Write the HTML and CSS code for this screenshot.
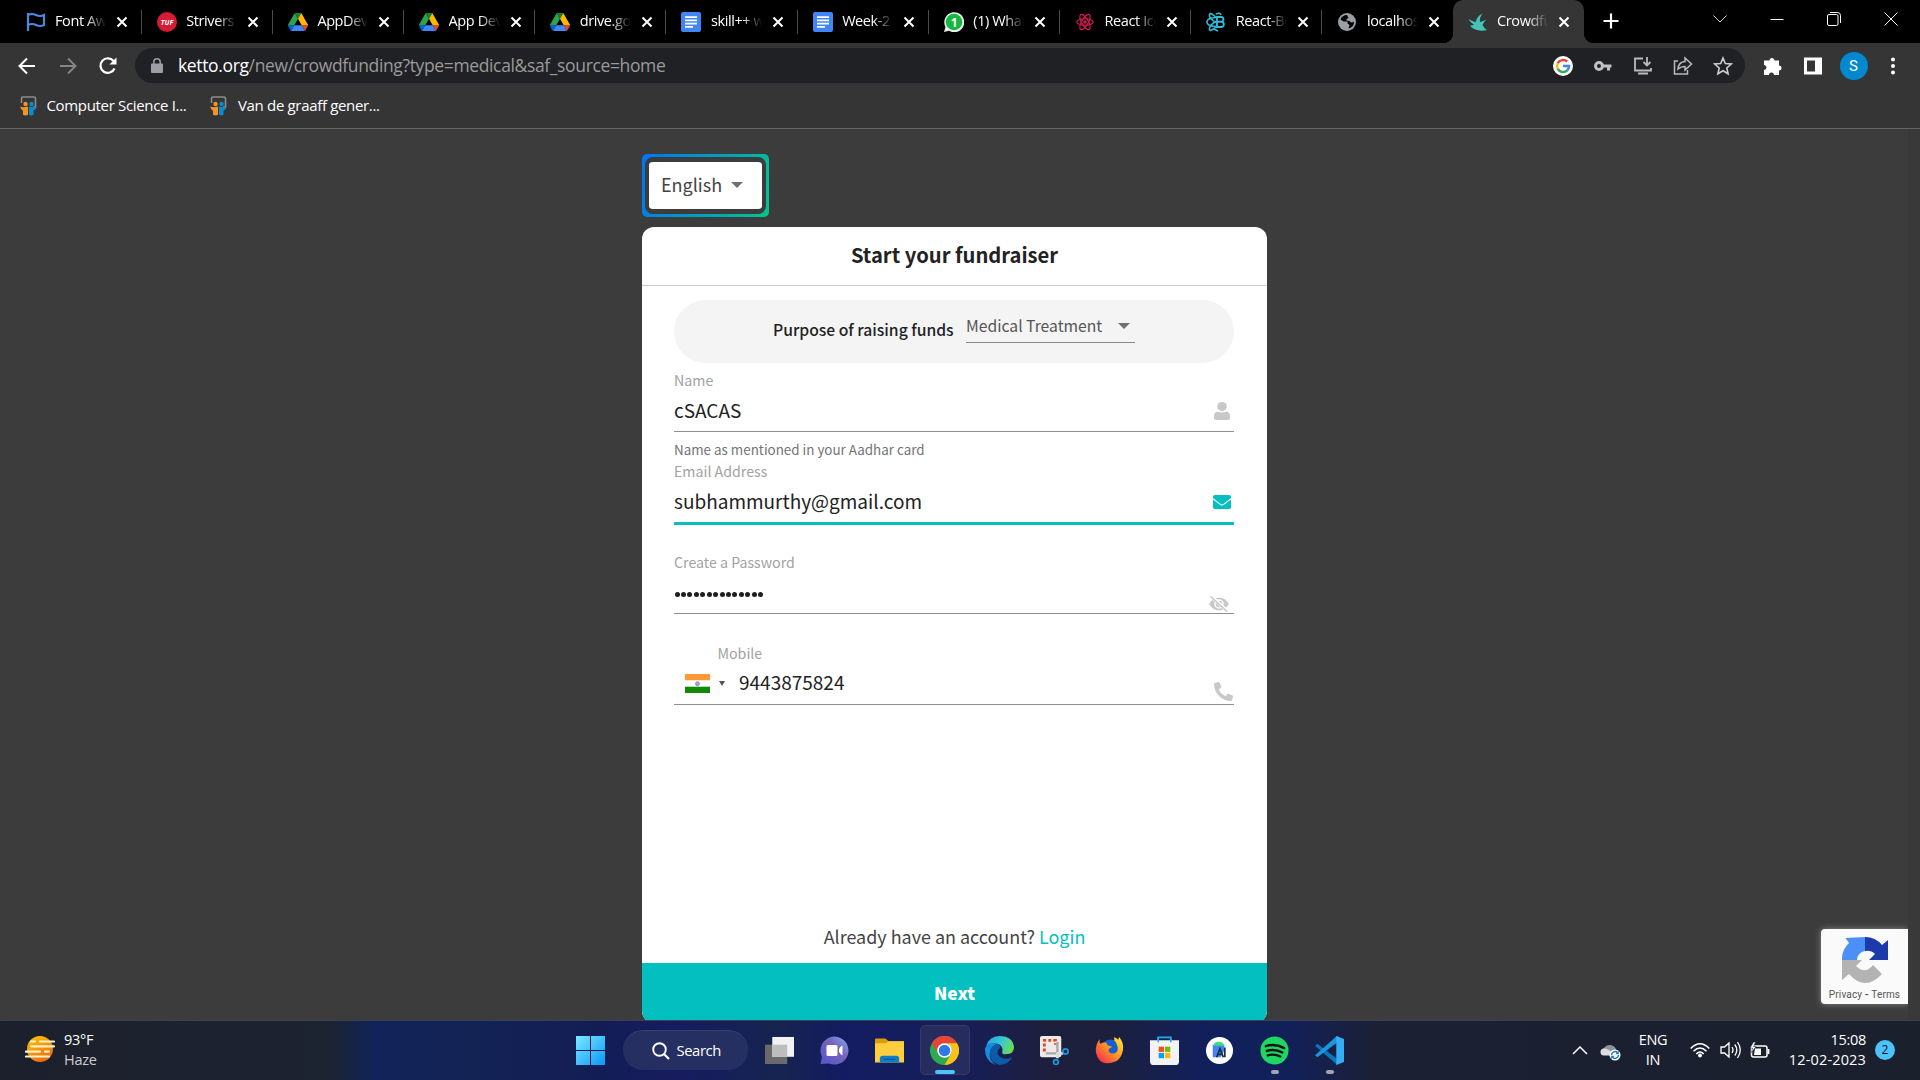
FILE: index.html
```html
<!DOCTYPE html>
<html lang="en">
<head>
<meta charset="utf-8">
<title>Crowdfunding</title>
<link rel="stylesheet" href="styles.css">
</head>
<body>
<svg class="defs" width="0" height="0">
  <defs>
    <symbol id="x" viewBox="0 0 12 12"><path d="M1.5 1.5l9 9M10.500 1.500l-9 9" stroke="#fff" stroke-width="2" fill="none"/></symbol>
    <symbol id="drive" viewBox="0 0 87.300 78"><path d="m6.600 66.850 3.850 6.650c.8 1.400 1.950 2.500 3.300 3.300l13.750-23.800h-27.500c0 1.550.4 3.100 1.200 4.500z" fill="#0066da"/><path d="m43.650 25-13.750-23.800c-1.350.8-2.500 1.900-3.300 3.300l-25.400 44a9.060 9.060 0 0 0-1.200 4.500h27.500z" fill="#2ba24c"/><path d="m73.550 76.800c1.350-.8 2.500-1.900 3.300-3.300l1.600-2.750 7.650-13.250c.8-1.400 1.200-2.950 1.200-4.500h-27.502l5.852 11.500z" fill="#ea4335"/><path d="m43.650 25 13.750-23.800c-1.350-.8-2.900-1.200-4.500-1.200h-18.500c-1.600 0-3.150.45-4.500 1.200z" fill="#188038"/><path d="m59.800 53h-32.300l-13.750 23.800c1.350.8 2.900 1.200 4.500 1.200h50.800c1.600 0 3.150-.45 4.500-1.200z" fill="#4285f4"/><path d="m73.400 26.500-12.700-22c-.8-1.400-1.950-2.500-3.300-3.300l-13.750 23.800 16.150 28h27.450c0-1.550-.4-3.100-1.200-4.500z" fill="#ffba00"/></symbol>
    <symbol id="docs" viewBox="0 0 20 20"><rect width="20" height="20" rx="2" fill="#4285f4"/><path d="M4 5.200h12M4 8.400h12M4 11.600h12M4 14.800h8" stroke="#fff" stroke-width="1.700"/></symbol>
    <symbol id="slide" viewBox="0 0 17 20"><path d="M1.500 7V2.500Q1.500 1 3 1h11q1.500 0 1.500 1.500V11H13" fill="none" stroke="#8d8d8d" stroke-width="1.600"/><circle cx="5.500" cy="8" r="2.200" fill="#f79421"/><circle cx="11.500" cy="8" r="2.200" fill="#0a8bd0"/><path d="M.3 10.500Q3 12 8 10.600v8.200q-2.500 1.600-5 0v-4Q.6 13.500.3 10.500z" fill="#f79421"/><path d="M16.700 10.500Q14 12 9 10.600v8.200q2.500 1.600 4.500 0v-4q2.900-1.300 3.200-4.300z" fill="#0a8bd0"/></symbol>
    <symbol id="atom" viewBox="0 0 20 22"><g fill="none" stroke="currentColor" stroke-width="1.300"><ellipse cx="10" cy="11" rx="9" ry="3.600"/><ellipse cx="10" cy="11" rx="9.500" ry="3.600" transform="rotate(60 10 11)"/><ellipse cx="10" cy="11" rx="9.500" ry="3.600" transform="rotate(120 10 11)"/></g><circle cx="10" cy="11" r="1.900" fill="currentColor"/></symbol>
  </defs>
</svg>

<header class="tabs">
  <div class="tab"><svg class="fav" viewBox="0 0 20 20"><path d="M2 1v18M2 3q4-2 8 0t8 0v10q-4 2-8 0t-8 0" fill="none" stroke="#4a8be0" stroke-width="2.200"/></svg><span>Font Awesome</span><svg class="close"><use href="#x"/></svg></div>
  <div class="tab"><svg class="fav" viewBox="0 0 20 20"><circle cx="10" cy="10" r="10" fill="#d81b34"/><text x="10" y="13" text-anchor="middle" class="tuf">TUF</text></svg><span>Strivers A2Z</span><svg class="close"><use href="#x"/></svg></div>
  <div class="tab"><svg class="fav"><use href="#drive"/></svg><span>AppDev Files</span><svg class="close"><use href="#x"/></svg></div>
  <div class="tab"><svg class="fav"><use href="#drive"/></svg><span>App Dev Files</span><svg class="close"><use href="#x"/></svg></div>
  <div class="tab"><svg class="fav"><use href="#drive"/></svg><span>drive.google</span><svg class="close"><use href="#x"/></svg></div>
  <div class="tab"><svg class="fav"><use href="#docs"/></svg><span>skill++ week</span><svg class="close"><use href="#x"/></svg></div>
  <div class="tab"><svg class="fav"><use href="#docs"/></svg><span>Week-2 work</span><svg class="close"><use href="#x"/></svg></div>
  <div class="tab"><svg class="fav" viewBox="0 0 20 20"><path d="M0 20l1.500-5A10 10 0 1 1 5 18.700z" fill="#eee"/><circle cx="10" cy="10" r="8.300" fill="#14b83e"/><text x="10" y="14.500" text-anchor="middle" class="wa">1</text></svg><span>(1) WhatsApp</span><svg class="close"><use href="#x"/></svg></div>
  <div class="tab"><svg class="fav pink"><use href="#atom"/></svg><span>React Icons</span><svg class="close"><use href="#x"/></svg></div>
  <div class="tab"><svg class="fav" viewBox="0 0 20 20"><g fill="none" stroke="#2fbad6" stroke-width="1.600"><path d="M10 5.500C7 2 4 .5 3.500 2.500S5 8 10 10.500M10 5.500Q1 6 .9 10T10 14.500M10 14.500C7 18 4 19.500 3.500 17.500S5 12 10 9.500"/><path d="M10 2q4-2 5 1"/></g><path d="M11 5h4.200a2.400 2.400 0 0 1 .5 4.700A2.700 2.700 0 0 1 15.500 15H11zM11 9.700h4M8 17l4 2" fill="none" stroke="#2fbad6" stroke-width="1.900"/></svg><span>React-Bootstrap</span><svg class="close"><use href="#x"/></svg></div>
  <div class="tab last"><svg class="fav" viewBox="0 0 20 20"><circle cx="10" cy="10" r="9" fill="#9aa0a6"/><path d="M10 3q-5 0-6.500 4.500l3 2h4v2l2 1.500-1 3.500q6-1.500 5.500-7-3 2-4.500-.5l-3-.5V7l2-1z" fill="#050505"/></svg><span>localhost:30</span><svg class="close"><use href="#x"/></svg></div>
  <div class="tab active"><svg class="fav" viewBox="0 0 20 20"><path d="M.5 7Q4 9 7.500 10.200 9 4 14.500 1.500 11 6.500 12 10q3-.8 6.500-2.500-3.500 3-4 5.500 1.500 3.500 4.500 5-5 1.500-10 0Q4 16.500 2 13.500q2.500.3 4-.7Q2.500 11 .5 7z" fill="#44c4b5"/></svg><span>Crowdfunding</span><svg class="close"><use href="#x"/></svg></div>
  <svg class="plus" viewBox="0 0 16 16"><path d="M8 .5v15M.5 8h15" stroke="#fff" stroke-width="2.200"/></svg>
  <div class="window">
    <svg viewBox="0 0 16 16"><path d="M1.500 4.500L8 11l6.500-6.500" fill="none" stroke="#ccc"/></svg>
    <svg viewBox="0 0 16 16"><path d="M1.500 8.500h13" stroke="#fff"/></svg>
    <svg viewBox="0 0 16 16"><rect x="1.500" y="3.500" width="10.500" height="11" rx="1.500" fill="none" stroke="#fff"/><path d="M4 1.500h7.500q3 0 3 3V12" fill="none" stroke="#fff"/></svg>
    <svg viewBox="0 0 16 16"><path d="M1.500 1.500l13 13M14.500 1.500l-13 13" stroke="#fff"/></svg>
  </div>
</header>

<div class="toolbar">
  <div class="nav">
    <svg viewBox="0 0 20 20"><path d="M10 2.500L2.500 10l7.500 7.500M3 10h15" fill="none" stroke="#fff" stroke-width="2"/></svg>
    <svg viewBox="0 0 20 20"><path d="M10 2.500l7.500 7.500-7.500 7.500M17 10H2" fill="none" stroke="#858585" stroke-width="2"/></svg>
    <svg viewBox="0 0 20 20"><path d="M16.500 12.500A7.300 7.300 0 1 1 15.500 5" fill="none" stroke="#fff" stroke-width="2.200"/><path d="M18.500 1.500v7h-7z" fill="#fff"/></svg>
  </div>
  <div class="omnibox">
    <svg class="lock" viewBox="0 0 12 16"><rect y="5.500" width="12" height="9.500" rx="1" fill="#9aa0a6"/><path d="M2.800 6V4a3.200 3.200 0 0 1 6.400 0v2" fill="none" stroke="#9aa0a6" stroke-width="1.500"/></svg>
    <div class="url"><b>ketto.org</b>/new/crowdfunding?type=medical&amp;saf_source=home</div>
    <div class="actions">
      <svg viewBox="0 0 20 20"><circle cx="10" cy="10" r="10" fill="#fff"/><g fill="none" stroke-width="2.500"><path d="M4.700 7.300A6 6 0 0 1 14.200 5.700" stroke="#ea4335"/><path d="M4.700 12.700a6 6 0 0 1 0-5.400" stroke="#fbbc05"/><path d="M14.200 14.400a6 6 0 0 1-9.500-1.700" stroke="#34a853"/><path d="M10 10h6a6 6 0 0 1-1.900 4.400" stroke="#4285f4"/></g></svg>
      <svg viewBox="0 0 20 20"><circle cx="6" cy="10" r="3.500" fill="none" stroke="#c0c0c0" stroke-width="3"/><path d="M9 10h9.500M15.500 10v4.500" stroke="#c0c0c0" stroke-width="3"/></svg>
      <svg viewBox="0 0 20 20"><path d="M10 2.500H2v12h16V12M14 1v8M10.500 6l3.500 3.500L17.500 6M5 17.500h10" fill="none" stroke="#bbb" stroke-width="1.800"/></svg>
      <svg viewBox="0 0 20 20"><path d="M5 5H1.500v13h13v-4M5 13q.5-7 7-7.500V2l6.500 6-6.500 6v-3.500Q8 10.500 5 13z" fill="none" stroke="#bbb" stroke-width="1.500"/></svg>
      <svg viewBox="0 0 20 20"><path d="M10 2l2.300 5.500 6 .5-4.500 4 1.300 5.800L10 14.700l-5.100 3.100L6.200 12 1.700 8l6-.5z" fill="none" stroke="#ccc" stroke-width="1.600"/></svg>
    </div>
  </div>
  <div class="ext">
    <svg viewBox="0 0 20 20"><path d="M1 4.500h5.500a2.500 2.500 0 0 1 5 0H16v5a2.500 2.500 0 0 1 0 5V19h-5a2.500 2.500 0 0 0-5 0H1v-5a2.500 2.500 0 0 0 0-5z" fill="#fff"/></svg>
    <svg viewBox="0 0 20 20"><path d="M1 1.500h18v17H1zM4 4.500v11h8v-11z" fill="#fff" fill-rule="evenodd"/></svg>
    <span class="avatar">S</span>
    <svg viewBox="0 0 20 20"><circle cx="10" cy="3.500" r="2" fill="#fff"/><circle cx="10" cy="10" r="2" fill="#fff"/><circle cx="10" cy="16.500" r="2" fill="#fff"/></svg>
  </div>
</div>

<div class="bookmarks">
  <svg><use href="#slide"/></svg><span class="bm1">Computer Science I...</span>
  <svg><use href="#slide"/></svg><span class="bm2">Van de graaff gener...</span>
</div>

<main class="page">
  <div class="content">
    <div class="lang-ring"><div class="lang"><span>English</span><i class="caret"></i></div></div>
    <section class="card">
      <h1><span>Start your fundraiser</span></h1>
      <div class="purpose"><strong>Purpose of raising funds</strong><div class="select"><span>Medical Treatment</span><i class="caret"></i></div></div>
      <div class="field name"><label>Name</label><div class="value"><span>cSACAS</span><svg viewBox="0 0 16 18"><ellipse cx="8" cy="4.600" rx="4.800" ry="4.600" fill="#c8c8c8"/><path d="M0 16v-2q0-4 4-4.200 4 1.400 8 0 4 .2 4 4.200v2q0 2-2 2H2q-2 0-2-2z" fill="#c8c8c8"/></svg></div></div>
      <div class="hint">Name as mentioned in your Aadhar card</div>
      <div class="field email"><label>Email Address</label><div class="value"><span>subhammurthy@gmail.com</span><svg viewBox="0 0 18 14"><rect width="18" height="14" rx="1.800" fill="#04bfbf"/><path d="M0 3.800l7.300 5.600q1.700 1.200 3.400 0L18 3.800" fill="none" stroke="#fff" stroke-width="1.100"/></svg></div></div>
      <div class="field password"><label>Create a Password</label><div class="value"><div class="dots"><i></i><i></i><i></i><i></i><i></i><i></i><i></i><i></i><i></i><i></i><i></i><i></i><i></i><i></i></div><svg viewBox="0 0 20 16"><path d="M0 8q4-6.500 10-6.500T20 8q-4 6.500-10 6.500T0 8z" fill="#c8c8c8"/><circle cx="10" cy="8" r="4" fill="none" stroke="#fff" stroke-width="1.500"/><path d="M2 0l17 16" stroke="#fff" stroke-width="3.500"/><path d="M1.500.5l16.500 15" stroke="#c8c8c8" stroke-width="1.600"/></svg></div></div>
      <div class="field mobile"><label>Mobile</label><div class="value"><svg class="flag" viewBox="0 0 25 19"><path fill="#ff9933" d="M0 0h25v6.500H0z"/><path fill="#fff" d="M0 6.500h25V13H0z"/><path fill="#128807" d="M0 12.700h25V19H0z"/><circle cx="12.500" cy="9.700" r="2" fill="#a0a0dc" stroke="#7777c4" stroke-width=".7"/></svg><i class="tiny"></i><span>9443875824</span><svg class="phone" viewBox="0 0 512 512"><path d="M493 25L389 1q-17-4-25 12l-48 112q-5 15 7 25l61 50q-54 120-184 184l-50-61q-10-12-25-7L13 364q-16 8-12 25l24 104q5 19 24 19Q242 512 377 377T512 49q0-19-19-24z" transform="matrix(-1 0 0 1 512 0)" fill="#c8c8c8"/></svg></div></div>
      <p class="account"><span>Already have an account? </span><a>Login</a></p>
      <button class="next">Next</button>
    </section>
  </div>
  <aside class="captcha">
    <svg viewBox="0 0 46 46"><path d="M23 0v14a9 9 0 0 0-8 9H0A22 22 0 0 1 7 6L3.500 1z" fill="#4a90f5"/><path d="M23 0a22 22 0 0 1 17 8l6-5v20H27l6-6q-4-4-10-3z" fill="#1c3aa9"/><path d="M0 23h20l-6 6q9 9 17-1l9 9Q23 55 7 37l-7 6z" fill="#b3b3b3"/></svg>
    <small>Privacy <b>-</b> Terms</small>
  </aside>
</main>

<footer class="taskbar">
  <div class="weather">
    <svg viewBox="0 0 30 26"><defs><linearGradient id="sun" x1="0" y1="0" x2=".6" y2="1"><stop stop-color="#ffc900"/><stop offset="1" stop-color="#ee6b10"/></linearGradient></defs><circle cx="15" cy="13" r="13" fill="url(#sun)"/><g stroke="#fff1c9" stroke-width="2.200" stroke-linecap="round"><path d="M6 5.500h4M15 5.500h14M6 10.300h23M1 15.600h14M20 15.600h4M1 20.500h23"/></g></svg>
    <div><span>93°F</span><em>Haze</em></div>
  </div>
  <div class="apps">
    <div class="app"><svg viewBox="0 0 29 29"><defs><linearGradient id="win" x1="0" y1="0" x2="1" y2="1"><stop stop-color="#7aeaff"/><stop offset="1" stop-color="#0a97f5"/></linearGradient></defs><path d="M0 0h14v14H0zM15 0h14v14H15zM0 15h14v14H0zM15 15h14v14H15z" fill="url(#win)"/></svg></div>
    <div class="search"><svg viewBox="0 0 18 18"><circle cx="7.500" cy="7.500" r="6.300" fill="none" stroke="#fff" stroke-width="1.900"/><path d="M12 12l5 5" stroke="#fff" stroke-width="2.200"/></svg><span>Search</span></div>
    <div class="app"><svg viewBox="0 0 30 28"><path d="M0 8h23v20H0z" fill="#6a6a6a"/><path d="M7.500 0H30v20.500H7.500z" fill="#f2f2f2"/><path d="M7.500 8H23v12.500H7.500z" fill="#bdbdbd"/></svg></div>
    <div class="app"><svg viewBox="0 0 29 29"><defs><linearGradient id="chat" x1="0" y1="1" x2="1" y2="0"><stop stop-color="#5355cc"/><stop offset=".6" stop-color="#7666bd"/><stop offset="1" stop-color="#83aef0"/></linearGradient></defs><path d="M.5 28L2 21A14 14 0 1 1 9 27.500z" fill="url(#chat)"/><rect x="6.500" y="9" width="11" height="11" rx="1.500" fill="#fff"/><path d="M19 13q2.500-4 3.500-3v9q-1 1-3.500-3z" fill="#fff"/></svg></div>
    <div class="app"><svg viewBox="0 0 30 27"><path d="M0 5V2q0-1 1-1h9q1 0 2 1l2 2h16v8H0z" fill="#df9c0c"/><path d="M0 6h11l3-2h16v22H0z" fill="#ffce3f"/><path d="M5 26v-4q0-3 3-3h14q3 0 3 3v4z" fill="#127cc8"/><path d="M9 22.500h12" stroke="#064f8c"/></svg></div>
    <div class="app open current"><svg viewBox="0 0 30 30"><circle cx="15" cy="15" r="15" fill="#2da94f"/><path d="M2 7.500A15 15 0 0 1 28 7.500H15a7.500 7.500 0 0 0-6.800 10z" fill="#ea4335"/><path d="M15 7.500h13A15 15 0 0 1 15 30l6.500-11.200A7.500 7.500 0 0 0 15 7.500z" fill="#fbc116"/><circle cx="15" cy="15" r="7.500" fill="#fff"/><circle cx="15" cy="15" r="5.900" fill="#2d79e8"/></svg></div>
    <div class="app"><svg viewBox="0 0 30 30"><defs><linearGradient id="edge" x1="0" y1=".2" x2="1" y2=".5"><stop stop-color="#22a5e3"/><stop offset=".55" stop-color="#38c8d3"/><stop offset="1" stop-color="#6bdd4c"/></linearGradient></defs><path d="M1 11Q4 0 15 0q14 0 15 12 0 7-9 7-4 0-3-3 1-6-5-8Q5 6 1 11z" fill="url(#edge)"/><path d="M13 8Q3 5 0 13q0 14 12 17-8-4-7-12 1-8 8-10z" fill="#178bdc"/><path d="M13 8Q5 11 5 18q0 9 10 12 10-1 13-8-9 4-14-2-3-4 2-8-1-3-3-4z" fill="#0b5ba7"/></svg></div>
    <div class="app"><svg viewBox="0 0 30 30"><rect width="22" height="22" rx="2" fill="#ecebea"/><path d="M4.500 16V4.500H16V9" fill="none" stroke="#dc4a22" stroke-width="3" stroke-dasharray="3 2.200"/><path d="M18 6v12H6" fill="none" stroke="#aaa" stroke-width="2.500"/><path d="M18 17v6M18 18h6" stroke="#ddd" stroke-width="3"/><circle cx="26.500" cy="16" r="2.700" fill="none" stroke="#1698e0" stroke-width="1.800"/><circle cx="16.500" cy="27" r="2.500" fill="none" stroke="#1698e0" stroke-width="1.800"/></svg></div>
    <div class="app"><svg viewBox="0 0 30 30"><defs><linearGradient id="fox" x1="1" y1="0" x2="0" y2="1"><stop stop-color="#fff13d"/><stop offset=".45" stop-color="#ff9a22"/><stop offset="1" stop-color="#f3195b"/></linearGradient></defs><circle cx="16" cy="13" r="9.500" fill="#145fd0"/><path d="M5 3q-1 4 1 5 2-2 6-1 0 2 2 3l4 1q-4 2-4 3 0 5 6 4 5-2 3-8-1-4-3-5 0-4-1-4 4 1 5 3l1-3q5 6 4 13-2 13-14 14T1 17Q0 9 5 3z" fill="url(#fox)"/></svg></div>
    <div class="app"><svg viewBox="0 0 30 30"><path d="M8.500 7V1.500h13V7" fill="none" stroke="#23aaf2" stroke-width="1.800"/><path d="M0 4.500h30V26q0 4-4 4H4q-4 0-4-4z" fill="#f3f3f3"/><path d="M8.500 1.500v5M21.500 1.500v5" stroke="#23aaf2" stroke-width="1.600"/><path d="M9 11h5.500v5.500H9z" fill="#f25022"/><path d="M15.500 11H21v5.500h-5.500z" fill="#7fba00"/><path d="M9 17.500h5.500V23H9z" fill="#00a4ef"/><path d="M15.500 17.500H21V23h-5.500z" fill="#ffb900"/></svg></div>
    <div class="app"><svg viewBox="0 0 30 30"><circle cx="15" cy="15" r="14" fill="#fff"/><path d="M8 9h12v6l-4 7H9q-1 0-1-1z" fill="#4285f4"/><path d="M9 10q0-4 5-4t6 4z" fill="#3ddc84"/><path d="M12 22l3.500-9 3.500 9M13 19h5M20.500 12v10" fill="none" stroke="#173045" stroke-width="1.800"/></svg></div>
    <div class="app open"><svg viewBox="0 0 30 30"><circle cx="15" cy="15" r="14.500" fill="#1ed760"/><path d="M6 10.500q10-3 19 2M7 15.500q8-2.500 16 1.500M8 20q7-2 13 1.200" fill="none" stroke="#101418" stroke-width="2.500" stroke-linecap="round"/></svg></div>
    <div class="app open"><svg viewBox="0 0 30 30"><path d="M0 10l2.500-2L24 24.500V30L22 29z" fill="#0878bd"/><path d="M0 20l2.500 2L24 6V0l-2 .5z" fill="#1b95dc"/><path d="M22 0l8 3v24l-8 3z" fill="#33adf3"/></svg></div>
  </div>
  <div class="tray">
    <svg class="up" viewBox="0 0 16 10"><path d="M1 9l7-7 7 7" fill="none" stroke="#fff" stroke-width="1.500"/></svg>
    <svg class="cloud" viewBox="0 0 21 18"><path d="M3 12a4 4 0 0 1 1-7 7 7 0 0 1 12 1l2 6z" fill="#8f9499"/><path d="M4 12.500a3.500 3.500 0 0 1 0-7q4 0 8 4l-2 3z" fill="#ddd"/><circle cx="15" cy="12" r="5.500" fill="#fff"/><path d="M11.500 12a3.500 3.500 0 0 1 6-2.300M18.500 12a3.500 3.500 0 0 1-6 2.300" fill="none" stroke="#1976c9" stroke-width="1.500"/><path d="M18.800 7.800v3.400h-3.400zM11.200 16.200v-3.400h3.400z" fill="#1976c9"/></svg>
    <div class="ime"><span>ENG</span><span>IN</span></div>
    <svg class="wifi" viewBox="0 0 20 16"><g fill="none" stroke="#fff" stroke-width="1.500"><path d="M.7 6.500q9.300-9.500 18.600 0M3.500 9.200q6.500-6.500 13 0M6.300 12q3.700-3.800 7.400 0"/></g><circle cx="10" cy="13.500" r="1.900" fill="#fff"/></svg>
    <svg class="speaker" viewBox="0 0 21 18"><path d="M1 6h3.500L9 2v14l-4.500-4H1zM12 6q2 3 0 6M14.800 3.500q4 5.500 0 11M17.500 1q5.500 8 0 16" fill="none" stroke="#fff" stroke-width="1.300"/></svg>
    <svg class="battery" viewBox="0 0 20 16"><rect x="1.500" y="4" width="15.500" height="11" rx="2" fill="none" stroke="#fff" stroke-width="1.500"/><path d="M18.500 7v5" stroke="#fff" stroke-width="1.800"/><path d="M5 6.500h6V13H4z" fill="#fff"/><path d="M3.500 0L0 6h2.500L1.500 10.500 6 4.500H3.500L5.500 0z" fill="#fff" stroke="#1a2130" stroke-width=".5"/></svg>
    <div class="clock"><span>15:08</span><span class="date">12-02-2023</span></div>
    <span class="badge">2</span>
  </div>
</footer>
</body>
</html>
```
FILE: styles.css
```css
* { box-sizing: border-box; }
body { margin: 0; width: 1920px; height: 1080px; overflow: hidden; display: flex; flex-direction: column; background: #3c3c3c; font-family: "Open Sans", "Noto Sans", sans-serif; color: #fff; }
svg { display: block; flex: none; }
i { font-style: normal; }
.defs { position: absolute; }

.tabs { height: 43px; flex: none; background: #000; display: flex; padding-left: 10.500px; }
.tab { width: 131.200px; height: 43px; flex: none; display: flex; align-items: center; padding-left: 15px; position: relative; font-size: 14.500px; letter-spacing: -.4px; }
.tab::after { content: ""; position: absolute; right: 0; top: 10px; width: 1px; height: 24px; background: #4b4b4b; }
.tab.last::after, .tab.active::after { display: none; }
.tab.active { background: #353535; border-radius: 10px 10px 0 0; margin-left: -1px; }
.tab.active::before { content: ""; position: absolute; z-index: 1; bottom: 0; left: -10px; width: 151.200px; height: 10px; background: radial-gradient(circle at 0 0, transparent 10px, #353535 10.500px) 0 0 / 10px 10px no-repeat, radial-gradient(circle at 100% 0, transparent 10px, #353535 10.500px) 100% 0 / 10px 10px no-repeat; }
.tab .fav { width: 20px; height: 20px; }
.tab span { width: 51px; margin: -2px 0 0 9.500px; overflow: hidden; white-space: nowrap; line-height: 22px; -webkit-mask-image: linear-gradient(90deg, #000 60%, transparent); mask-image: linear-gradient(90deg, #000 60%, transparent); }
.tab .close { width: 12px; height: 12px; margin-left: 10px; }
.pink { color: #d81b53; }
.tuf { font: italic bold 7px "Open Sans", sans-serif; fill: #fff; letter-spacing: 0; }
.wa { font: bold 12px "Open Sans", sans-serif; fill: #fff; }
.plus { width: 16px; height: 16px; margin: 13px 0 0 19.500px; }
.window { margin-left: auto; width: 229px; height: 37px; display: flex; align-items: center; justify-content: space-around; }
.window svg { width: 16px; height: 16px; }

.toolbar { height: 45px; flex: none; background: #353535; display: flex; align-items: center; }
.nav { width: 135px; display: flex; gap: 20.500px; padding-left: 17px; }
.nav svg, .actions svg, .ext svg { width: 20px; height: 20px; }
.omnibox { width: 1610px; height: 35px; border-radius: 18px; background: #202124; display: flex; align-items: center; padding: 0 12px 0 16px; }
.lock { width: 12px; height: 16px; }
.url { margin: -2px 0 0 15px; font-size: 17.500px; line-height: 24px; letter-spacing: -.36px; color: #9a9a9a; white-space: nowrap; }
.url b { font-weight: 400; color: #fff; }
.actions { margin-left: auto; display: flex; gap: 20px; }
.ext { display: flex; align-items: center; gap: 20px; padding-left: 17.500px; }
.ext svg:last-child { margin-left: -1.500px; }
.avatar { width: 28px; height: 28px; margin: 0 -3px; border-radius: 50%; background: #0288d1; text-align: center; font: 15px/28px Roboto, sans-serif; }

.bookmarks { height: 41px; flex: none; background: #353535; border-bottom: 1px solid #646464; display: flex; padding: 7px 0 0 19.500px; font-size: 15px; line-height: 20px; letter-spacing: -.33px; }
.bookmarks svg { width: 17px; height: 20px; margin: 1px 10px 0 0; }
.bookmarks svg:nth-of-type(2) { margin-right: 11.500px; }
.bm1 { width: 163px; white-space: nowrap; }

.page { height: 891px; flex: none; position: relative; overflow: hidden; background: linear-gradient(90deg, #3c3c3c 1908px, #393939 1908px); font-family: "Noto Sans CJK SC", sans-serif; color: #222; padding: 25px 0 0 642px; }
.content { width: 625px; }
.lang-ring { width: 127px; height: 63px; border-radius: 5px; padding: 3px; background: linear-gradient(110deg, #0072f5, #00c78c); }
.lang { height: 57px; border: 4px solid #3c3c3c; border-top-width: 5px; border-bottom-width: 5px; border-radius: 8px; background: #fff; display: flex; align-items: center; padding-left: 12px; font-size: 18px; color: #444; line-height: 24px; }
.lang span { margin-top: -3px; }
.lang .caret { margin: -2px 0 0 9px; }
.caret { width: 0; height: 0; border: 6px solid transparent; border-top-color: #707070; border-bottom: 0; }
.card { margin-top: 10px; height: 796px; background: #fff; border-radius: 12px; overflow: hidden; }
h1 { margin: 0; height: 59px; border-bottom: 1px solid #ccc; text-align: center; font-size: 20.200px; line-height: 55px; font-weight: 700; }
.purpose { margin: 14px 33px 0 32px; height: 63px; border-radius: 32px; background: #f4f4f4; display: flex; padding-left: 99px; }
.purpose strong { width: 193px; font-size: 15.700px; line-height: 60px; font-weight: 500; white-space: nowrap; }
.select { width: 169px; height: 43px; border-bottom: 1px solid #888; display: flex; align-items: center; justify-content: space-between; padding: 10px 5px 0 0; font-size: 15.700px; line-height: 24px; color: #555; }
.select span { margin-top: -1px; }
.field { margin: 0 33px 0 32px; border-bottom: 1px solid #8f8f8f; }
.field label { display: block; font-size: 14.200px; line-height: 20px; color: #a2a2a2; }
.value { height: 30px; display: flex; align-items: center; justify-content: space-between; font-size: 19px; line-height: 26px; }
.value span { margin-top: -3px; }
.name { padding-top: 7px; height: 69px; }
.name .value { margin-top: 6px; }
.name svg { width: 16px; height: 18px; margin-right: 4px; }
.hint { margin: 7px 32px 2px; font-size: 13.400px; line-height: 20px; color: #747474; }
.email { height: 64px; border-bottom: 3px solid #04bfbf; }
.email label, .password label, .mobile label { padding-top: 0; }
.email .value { margin-top: 6px; }
.email svg { width: 18px; height: 14px; margin-right: 3px; }
.password { margin-top: 27px; height: 62px; }
.password .value { margin-top: 7px; }
.password svg { width: 20px; height: 16px; margin: 19px 5px 0 0; }
.dots { display: flex; gap: 1.440px; padding-left: .5px; }
.dots i { width: 5px; height: 5px; border-radius: 50%; background: #1e1e1e; }
.mobile { margin-top: 29px; height: 62px; }
.mobile label { padding-left: 43.500px; }
.mobile .value { margin-top: 6px; justify-content: flex-start; }
.mobile .value span { margin-top: -4px; }
.flag { width: 25px; height: 19px; margin: -2px 0 0 11px; }
.tiny { border: 3px solid transparent; border-top: 5px solid #555; border-bottom: 0; margin: -2px 14px 0 9px; }
.phone { width: 19px; height: 19px; margin: 14px 1px 0 auto; }
.account { margin: 216px 0 0; height: 42px; text-align: center; font-size: 17.950px; line-height: 30px; color: #444; }
.account a { color: #04bfbf; }
.next { display: block; width: 100%; height: 61px; border: 0; padding: 0; background: #04bfbf; color: #fff; font: 900 17.500px/59px "Noto Sans CJK SC", sans-serif; padding-bottom: 2px; }
.captcha { position: absolute; left: 1821px; top: 800px; width: 87px; height: 75px; border-radius: 4px 0 0 4px; background: #fafafa; box-shadow: 0 0 6px #888; clip-path: inset(-8px 0 -8px -8px); text-align: center; }
.captcha svg { width: 46px; height: 46px; margin: 8px 0 0 21px; }
.captcha small { display: block; margin-top: 5px; font: 10px/14px Roboto, sans-serif; letter-spacing: .15px; color: #555; white-space: nowrap; }

.taskbar { height: 60px; flex: none; border-top: 1px solid #3b4152; background: linear-gradient(90deg, #1c202c 0, #1c2331 330px, #11235a 375px, #132354 470px, #121d55 600px, #171c5f 680px, #15244f 780px, #131c61 840px, #161e5a 960px, #1d1f3c 1050px, #1c203d 1110px, #11205c 1200px, #122059 1290px, #1b2033 1380px, #1b202d 1920px); display: flex; position: relative; }
.weather { width: 563px; display: flex; padding: 8.500px 0 0 25px; font-size: 14.500px; line-height: 20px; letter-spacing: -.3px; }
.weather svg { width: 30px; height: 26px; margin: 6px 9px 0 0; }
.weather span, .weather em { display: block; font-style: normal; }
.weather em { color: #ccc; }
.apps { display: flex; align-items: center; height: 58px; }
.app { width: 55px; height: 50px; display: flex; align-items: center; justify-content: center; position: relative; }
.app svg { width: 29px; height: 29px; }
.search { width: 125px; height: 40px; margin: 0 4.500px; border-radius: 20px; border-top: 1px solid #374073; background: #262f61; display: flex; align-items: center; padding-left: 29px; font-size: 14.800px; letter-spacing: -.4px; }
.search svg { width: 18px; height: 18px; margin-right: 7px; }
.search span { margin-top: -1px; }
.current { background: #272c5e; width: 50px; margin: 0 2.500px; border: 1px solid #363a68; border-radius: 5px; }
.open::after { content: ""; position: absolute; bottom: 1px; left: 50%; width: 8px; height: 4px; margin-left: -4px; border-radius: 2px; background: #a0a4b4; }
.current::after { width: 20px; margin-left: -10px; bottom: 0; background: #4cc2ff; }
.tray { margin-left: auto; width: 348px; display: flex; align-items: center; height: 58px; font-size: 14.500px; line-height: 20px; letter-spacing: -.3px; }
.tray span { display: block; }
.up { width: 16px; height: 10px; }
.cloud { width: 21px; height: 18px; margin: 4px 0 0 12px; }
.ime { width: 44px; margin-left: 10px; text-align: center; }
.wifi { width: 20px; height: 16px; margin-left: 15px; }
.speaker { width: 21px; height: 18px; margin-left: 10px; }
.battery { width: 20px; height: 16px; margin-left: 9px; }
.clock { width: 96px; text-align: right; }
.date { letter-spacing: .15px; }
.tray .badge { width: 20px; height: 20px; margin-left: 9px; border-radius: 50%; background: #4cc2ff; color: #111; font-size: 12px; line-height: 20px; text-align: center; letter-spacing: 0; }
```
